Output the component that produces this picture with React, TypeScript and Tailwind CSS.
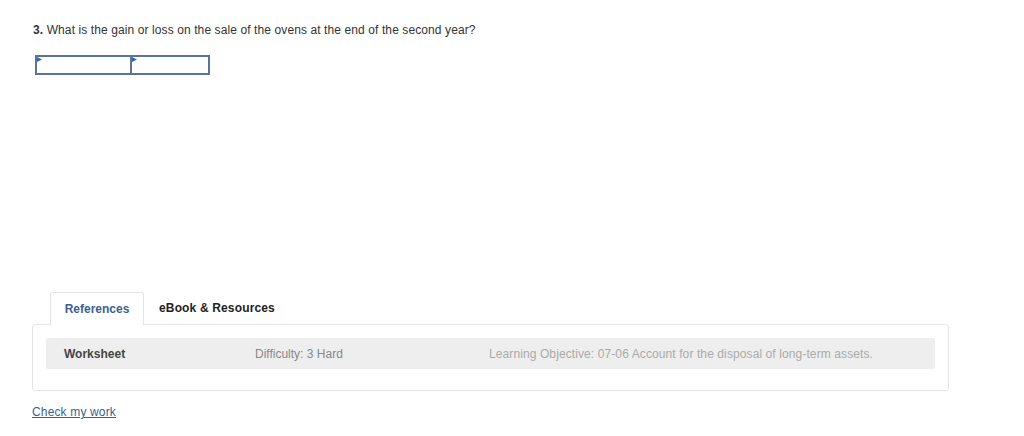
import React from "react";

const font = { fontFamily: '"Liberation Sans", Arial, sans-serif' };

function Cell({ w }: { w: string }) {
  return (
    <div className={`relative h-full ${w}`}>
      <svg className="absolute left-0 top-0" width="5" height="5" viewBox="0 0 5 5">
        <polygon points="0,0 5,2.5 0,5" fill="#2d6bb3" />
      </svg>
    </div>
  );
}

export default function App() {
  return (
    <div className="w-[1024px] h-[436px] bg-white text-[#333]" style={font}>
      <div className="pl-[33px] pt-[23px]">
        <p className="text-[12px] leading-[14px] tracking-[0.1px] text-[#333]">
          <span className="font-bold">3.</span> What is the gain or loss on the sale of the ovens at the end of the second year?
        </p>
        <div className="ml-[2px] mt-[18px] flex h-[20px] w-[175px] border-2 border-[#5b7596]">
          <Cell w="w-[93px]" />
          <div className="w-[2px] h-full bg-[#5b7596]" />
          <Cell w="w-[76px]" />
        </div>
      </div>

      <div className="mt-[217px] ml-[32px] w-[917px]">
        <div className="flex h-[32px] pl-[18px]">
          <div className="relative z-10 flex h-[33px] w-[94px] items-center justify-center rounded-t-[3px] border border-b-0 border-[#e4e4e4] bg-white text-[12px] font-bold text-[#3d5f8f]">
            References
          </div>
          <div className="flex items-center pl-[15px] text-[12px] font-bold tracking-[0.15px] text-[#222]">
            eBook &amp; Resources
          </div>
        </div>
        <div className="rounded-[3px] border border-[#e6e6e6] px-[13px] pb-[21px] pt-[13px]">
          <div className="flex h-[31px] items-center rounded-[2px] bg-[#eeeeee] text-[12px]">
            <span className="w-[209px] pl-[18px] font-bold text-[#444]">Worksheet</span>
            <span className="w-[234px] text-[#888]">Difficulty: 3 Hard</span>
            <span className="tracking-[0.1px] text-[#aaa]">Learning Objective: 07-06 Account for the disposal of long-term assets.</span>
          </div>
        </div>
      </div>

      <div className="ml-[32px] mt-[8px]">
        <a href="#" className="text-[12px] tracking-[0.15px] text-[#3d5f8f] underline">Check my work</a>
      </div>
    </div>
  );
}
